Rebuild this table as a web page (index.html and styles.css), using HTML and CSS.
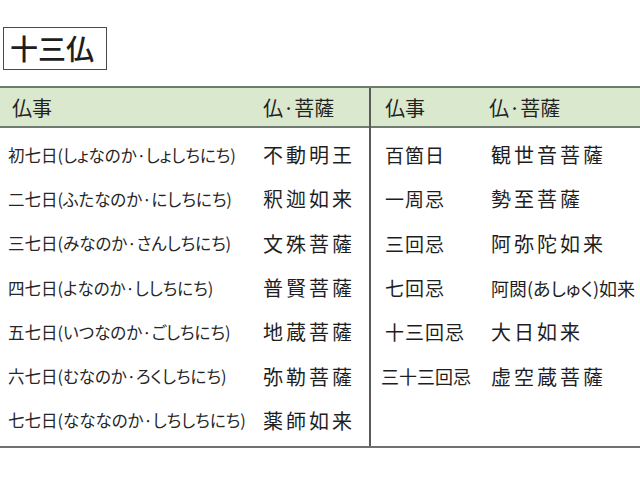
FILE: index.html
```html
<!DOCTYPE html>
<html lang="ja">
<head>
<meta charset="utf-8">
<link rel="stylesheet" href="styles.css">
</head>
<body>
<div class="title-wrap"><h1 class="title">十三仏</h1></div>
<div class="table">
  <div class="part left">
    <div class="head"><span class="c1">仏事</span><span class="c2">仏·菩薩</span></div>
    <div class="rows">
      <div class="row"><span class="c1">初七日(しょなのか·しょしちにち)</span><span class="c2">不動明王</span></div>
      <div class="row"><span class="c1">二七日(ふたなのか·にしちにち)</span><span class="c2">釈迦如来</span></div>
      <div class="row"><span class="c1">三七日(みなのか·さんしちにち)</span><span class="c2">文殊菩薩</span></div>
      <div class="row"><span class="c1">四七日(よなのか·ししちにち)</span><span class="c2">普賢菩薩</span></div>
      <div class="row"><span class="c1">五七日(いつなのか·ごしちにち)</span><span class="c2">地蔵菩薩</span></div>
      <div class="row"><span class="c1">六七日(むなのか·ろくしちにち)</span><span class="c2">弥勒菩薩</span></div>
      <div class="row"><span class="c1">七七日(なななのか·しちしちにち)</span><span class="c2">薬師如来</span></div>
    </div>
  </div>
  <div class="part right">
    <div class="head"><span class="c1">仏事</span><span class="c2">仏·菩薩</span></div>
    <div class="rows">
      <div class="row"><span class="c1">百箇日</span><span class="c2">観世音菩薩</span></div>
      <div class="row"><span class="c1">一周忌</span><span class="c2">勢至菩薩</span></div>
      <div class="row"><span class="c1">三回忌</span><span class="c2">阿弥陀如来</span></div>
      <div class="row"><span class="c1">七回忌</span><span class="c2 tight">阿閦(あしゅく)如来</span></div>
      <div class="row"><span class="c1">十三回忌</span><span class="c2">大日如来</span></div>
      <div class="row"><span class="c1 small">三十三回忌</span><span class="c2">虚空蔵菩薩</span></div>
    </div>
  </div>
</div>
</body>
</html>
```

FILE: styles.css
```css
html, body {
  margin: 0;
  padding: 0;
  background: #ffffff;
  width: 640px;
  height: 480px;
  overflow: hidden;
  font-family: "Noto Sans CJK JP", "Noto Sans", sans-serif;
  color: #1e1e1e;
}

.title-wrap {
  display: flex;
  padding: 27px 0 0 3px;
  height: 59px;
  box-sizing: border-box;
}

.title {
  margin: 0;
  border: 1.5px solid #4a4a4a;
  width: 104px;
  height: 43px;
  box-sizing: border-box;
  font-size: 28px;
  font-weight: 500;
  line-height: 40px;
  padding-left: 6px;
}

.table {
  display: grid;
  grid-template-columns: 371px 269px;
  margin-top: 27px;
  border-top: 2px solid #6e7a6e;
  border-bottom: 2px solid #707070;
  height: 362px;
  box-sizing: border-box;
}

.part.left {
  border-right: 2px solid #5a5a5a;
}

.head {
  display: flex;
  align-items: center;
  height: 40px;
  background: #dae8cd;
  border-bottom: 2px solid #707a70;
  box-sizing: border-box;
  font-size: 20px;
  font-weight: 400;
  color: #222;
}

.rows {
  padding-top: 4.5px;
}

.row {
  display: flex;
  align-items: center;
  height: 44.3px;
}

.left .head .c1 { width: 251px; padding-left: 12px; }
.right .head .c1 { width: 104px; padding-left: 14px; }

.left .row .c1 {
  width: 255px;
  padding-left: 8px;
  font-size: 16.5px;
  font-feature-settings: "palt" 1;
  white-space: nowrap;
  color: #262626;
}

.left .row .c2 {
  font-size: 20px;
  letter-spacing: 3px;
  white-space: nowrap;
}

.right .row .c1 {
  width: 104px;
  padding-left: 14px;
  font-size: 19px;
  letter-spacing: 1px;
  white-space: nowrap;
  box-sizing: border-box;
  flex: none;
}

.right .row .c1.small {
  padding-left: 10px;
  font-size: 18px;
  letter-spacing: 0;
}

.right .row .c2 {
  padding-left: 16px;
  font-size: 20px;
  letter-spacing: 3px;
  white-space: nowrap;
}

.right .row .c2.tight {
  font-size: 18px;
  letter-spacing: 0;
  font-feature-settings: "palt" 1;
}
```
